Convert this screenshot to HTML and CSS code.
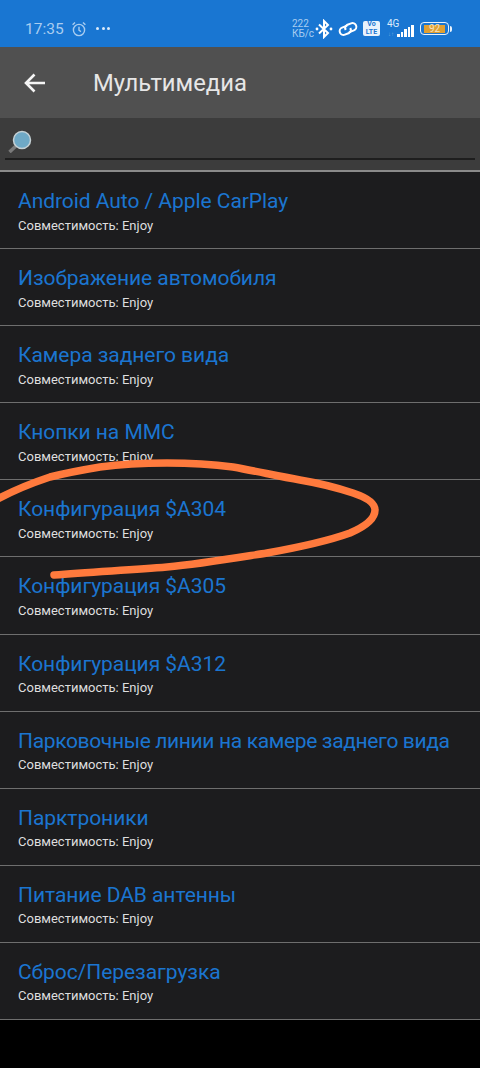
FILE: index.html
```html
<!DOCTYPE html>
<html>

<head>
    <meta charset="UTF-8">
    <title>Мультимедиа</title>
    <meta name="viewport" content="width=device-width,initial-scale=1">
    <link rel="stylesheet" href="styles.css">
</head>

<body>
    <div class="screen">
        <div class="status-bar">
            <div class="status-left">
                <span class="clock">17:35</span>
                <svg class="alarm" width="16" height="16" viewBox="0 0 16 16">
                    <circle cx="8" cy="9" r="5.6" />
                    <path d="M8 5.8V9.2L10 10.6M1.6 3.8L4 1.6M14.4 3.8L12 1.6" />
                </svg>
                <span class="dots"><i></i><i></i><i></i></span>
            </div>
            <div class="status-right">
                <span class="speed">222<br>КБ/с</span>
                <svg class="bt" width="18" height="20" viewBox="0 0 18 20">
                    <path d="M4 5.5L13 14L9 18V2L13 6L4 14.5" />
                    <circle cx="2" cy="10" r="1.4" />
                    <circle cx="16" cy="10" r="1.4" />
                </svg>
                <svg class="link" width="20" height="18" viewBox="0 0 20 18">
                    <g transform="rotate(-22 10 9)">
                        <path d="M10.500 5.500H5A3.800 3.800 0 0 0 5 13.100H9.500A3.800 3.800 0 0 0 12.500 9" />
                        <path d="M9.500 12.500H15A3.800 3.800 0 0 0 15 4.900H10.500A3.800 3.800 0 0 0 7.500 9" />
                    </g>
                </svg>
                <span class="volte">Vo<br>LTE</span>
                <span class="net">
                    <span class="net-type">4G</span>
                    <span class="net-arrows">↓↑</span>
                    <span class="bars"><i class="b1"></i><i class="b2"></i><i class="b3"></i><i class="b4"></i><i class="b5"></i></span>
                </span>
                <span class="battery"><span class="battery-fill">92</span></span>
            </div>
        </div>

        <div class="app-bar">
            <svg class="back" width="24" height="24" viewBox="0 0 24 24">
                <path d="M22 12H3M11.500 3.500L3 12L11.500 20.500" />
            </svg>
            <span class="app-title">Мультимедиа</span>
        </div>

        <div class="search-bar">
            <div class="search-field">
                <svg class="loupe" width="30" height="30" viewBox="0 0 30 30">
                    <path class="loupe-handle" d="M2.500 29L10 22" />
                    <circle class="loupe-glass" cx="15" cy="17" r="8.500" />
                </svg>
            </div>
        </div>

        <ul class="items">
            <li><a>Android Auto / Apple CarPlay</a><span>Совместимость: Enjoy</span></li>
            <li><a>Изображение автомобиля</a><span>Совместимость: Enjoy</span></li>
            <li><a>Камера заднего вида</a><span>Совместимость: Enjoy</span></li>
            <li><a>Кнопки на ММС</a><span>Совместимость: Enjoy</span></li>
            <li><a>Конфигурация $A304</a><span>Совместимость: Enjoy</span></li>
            <li><a>Конфигурация $A305</a><span>Совместимость: Enjoy</span></li>
            <li><a>Конфигурация $A312</a><span>Совместимость: Enjoy</span></li>
            <li><a class="long">Парковочные линии на камере заднего вида</a><span>Совместимость: Enjoy</span></li>
            <li><a>Парктроники</a><span>Совместимость: Enjoy</span></li>
            <li><a>Питание DAB антенны</a><span>Совместимость: Enjoy</span></li>
            <li><a>Сброс/Перезагрузка</a><span>Совместимость: Enjoy</span></li>
        </ul>

        <!-- marker circled by hand over the screenshot -->
        <svg class="scribble" width="480" height="1068" viewBox="0 0 480 1068">
            <path d="M54 575C90 572 130 570 167 567C200 564 235 558 267 553C295 548 325 542 350 533C364 527 375 519 375 510C375 502 365 497 353 493C335 487 318 483 300 480C278 476 255 471 233 467C210 464 188 463 167 463C145 463 122 464 100 467C82 470 66 473 50 477C32 483 14 490 -4 500" />
        </svg>
    </div>
</body>

</html>
```

FILE: styles.css
```css
* {
    box-sizing: border-box;
}

html,
body {
    margin: 0;
    padding: 0;
    background: #000;
}

.screen {
    position: relative;
    width: 480px;
    height: 1068px;
    overflow: hidden;
    background: #000;
    font-family: "Roboto", "Noto Sans", sans-serif;
}

/* status bar */
.status-bar {
    display: flex;
    justify-content: space-between;
    align-items: center;
    height: 47px;
    padding: 14px 31px 4px 25px;
    background: #1976d2;
    color: #a9cdf0;
}

.status-left {
    display: flex;
    align-items: center;
}

.clock {
    font-size: 15.500px;
    width: 46px;
}

.alarm {
    fill: none;
    stroke: #a9cdf0;
    stroke-width: 1.4;
}

.dots {
    display: flex;
    gap: 2.500px;
    margin-left: 9px;
}

.dots i {
    display: block;
    width: 3px;
    height: 3px;
    border-radius: 50%;
    background: #dcebfa;
}

.status-right {
    display: flex;
    align-items: center;
}

.speed {
    font-size: 10px;
    line-height: 10px;
    width: 23px;
}

.bt {
    fill: #fff;
    stroke: #fff;
    stroke-width: 2;
}

.bt path {
    fill: none;
}

.bt circle {
    stroke: none;
}

.link {
    margin-left: 5px;
    fill: none;
    stroke: #fff;
    stroke-width: 2;
}

.volte {
    width: 17px;
    height: 15px;
    margin-left: 5px;
    border-radius: 2px;
    background: #e8f2fc;
    color: #1976d2;
    font-size: 7px;
    font-weight: 700;
    line-height: 7.500px;
    text-align: center;
}

.net {
    position: relative;
    display: flex;
    align-items: flex-end;
    width: 29px;
    height: 20px;
    margin-left: 7px;
}

.net-type {
    position: absolute;
    top: 0;
    left: 0;
    color: #dcebfa;
    font-size: 10px;
    line-height: 10px;
}

.net-arrows {
    position: absolute;
    bottom: 2px;
    left: 1px;
    color: #6fa8df;
    font-size: 6px;
    line-height: 6px;
}

.bars {
    display: flex;
    align-items: flex-end;
    gap: 1px;
    margin: 0 0 2px 10px;
    height: 13px;
}

.bars i {
    display: block;
    width: 2.500px;
    background: #fff;
}

.bars .b1 { height: 3px; }
.bars .b2 { height: 5px; }
.bars .b3 { height: 8px; }
.bars .b4 { height: 10px; }
.bars .b5 { height: 12px; }

.battery {
    position: relative;
    width: 29px;
    height: 13px;
    margin-left: 4px;
    padding: 1.500px 3px;
    border: 1px solid #e8f2fc;
    border-radius: 4px;
}

.battery::after {
    content: "";
    position: absolute;
    top: 2.500px;
    right: -4px;
    width: 2px;
    height: 6px;
    border-radius: 0 2px 2px 0;
    background: #e8f2fc;
}

.battery-fill {
    display: block;
    height: 8px;
    background: #e0a033;
    color: #f5e3c0;
    font-size: 10px;
    line-height: 8px;
    text-align: center;
}

/* app bar */
.app-bar {
    display: flex;
    align-items: center;
    height: 71px;
    padding-left: 23px;
    background: #505050;
}

.back {
    fill: none;
    stroke: #f5f5f5;
    stroke-width: 2.600;
}

.app-title {
    margin-left: 46px;
    color: #e6e6e6;
    font-size: 23.800px;
}

/* search */
.search-bar {
    height: 54px;
    padding: 0 5px;
    background: #3c3c3c;
    border-bottom: 2px solid #8a8a8a;
}

.search-field {
    display: flex;
    align-items: center;
    height: 42px;
    padding-left: 2px;
    border-bottom: 2px solid #1e1e1e;
}

.loupe-handle {
    stroke: #7a7a7a;
    stroke-width: 3.500;
}

.loupe-glass {
    fill: #6fa9c6;
    stroke: #c5d0d4;
    stroke-width: 1.500;
}

/* list */
.items {
    margin: 0;
    padding: 0;
    list-style: none;
}

.items li {
    display: flex;
    flex-direction: column;
    height: 77.100px;
    padding: 16px 18px 0;
    background: #1c1c1e;
    border-bottom: 1px solid #6e6e6e;
}

.items a {
    color: #1b75d0;
    font-size: 21px;
    line-height: 26px;
    letter-spacing: -0.05px;
    white-space: nowrap;
}

.items a.long {
    letter-spacing: -0.35px;
}

.items span {
    margin-top: 2.500px;
    color: #dedede;
    font-size: 13px;
    line-height: 18px;
}

.scribble {
    position: absolute;
    top: 0;
    left: 0;
    fill: none;
    stroke: #ff7a3d;
    stroke-width: 7.500;
    stroke-linecap: round;
}
```
